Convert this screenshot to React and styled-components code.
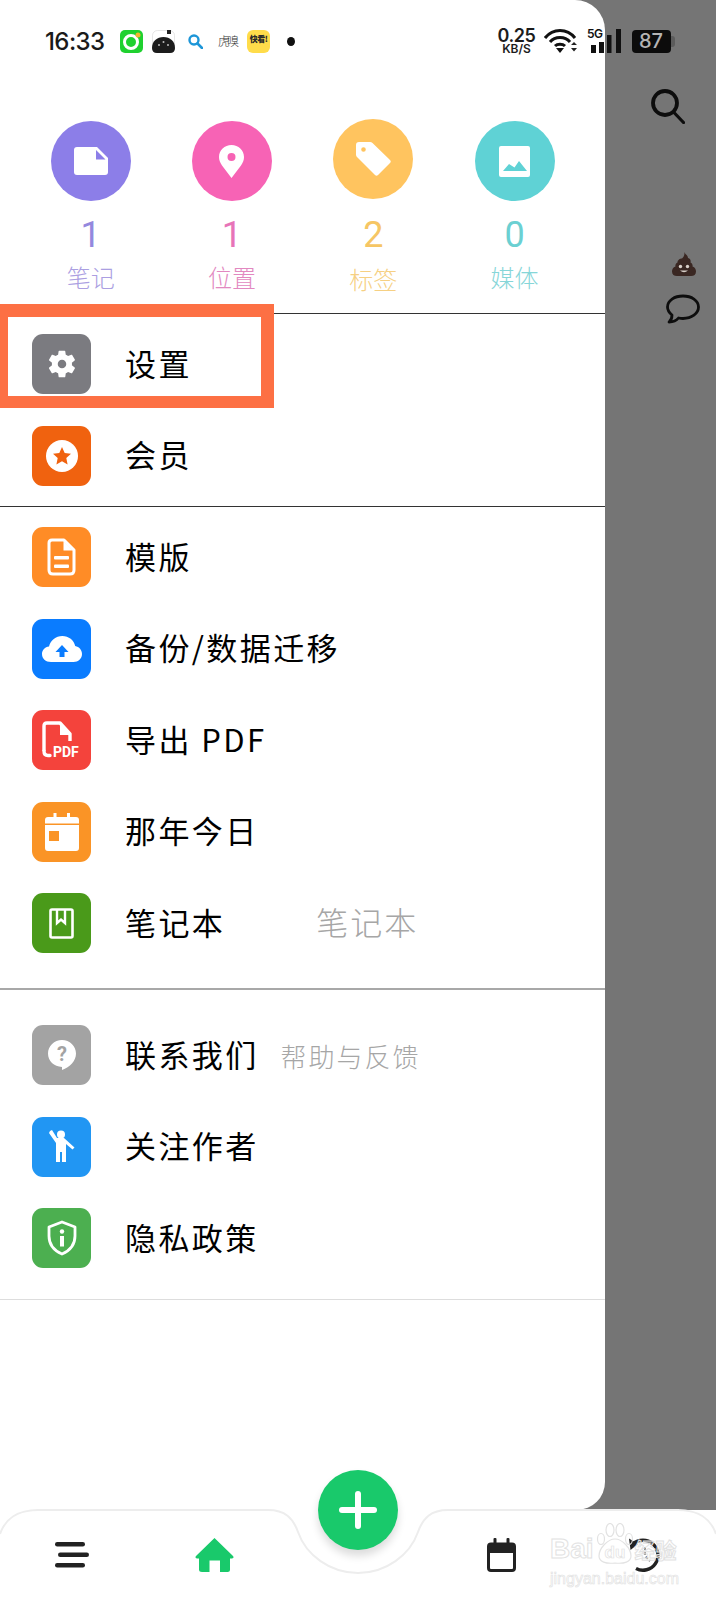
import React from 'react';
import styled, { createGlobalStyle } from 'styled-components';

const GlobalStyle = createGlobalStyle`
  html, body {
    margin: 0;
    padding: 0;
    background: #fff;
    font-family: "Noto Sans CJK SC", "Noto Sans", sans-serif;
  }
`;

// --- page frame --- //

const Page = styled.div`
  position: relative;
  width: 716px;
  height: 1600px;
  overflow: hidden;
  display: flex;
  flex-direction: column;
`;

const Backdrop = styled.div`
  display: flex;
  height: 1510px;
  background: #757575;
`;

const Drawer = styled.aside`
  position: relative;
  width: 605px;
  padding-top: 119px;
  box-sizing: border-box;
  background: #fff;
  border-radius: 0 30px 28px 0;
`;

const SideRail = styled.div`
  flex: 1;
  display: flex;
  flex-direction: column;
  align-items: flex-end;
  padding: 89px 16px 0 0;
`;

const RailIcon = styled.svg`
  display: block;
  margin-top: ${(p) => p.$top}px;
  margin-right: ${(p) => p.$right}px;
`;

// --- status bar --- //

const StatusBar = styled.div`
  position: absolute;
  top: 0;
  left: 0;
  width: 716px;
  height: 82px;
  box-sizing: border-box;
  padding: 0 45px;
  display: flex;
  align-items: center;
  justify-content: space-between;
`;

const StatusGroup = styled.div`
  display: flex;
  align-items: center;
`;

const Clock = styled.span`
  font-family: Inter, "Liberation Sans", sans-serif;
  font-size: 24px;
  font-weight: 500;
  letter-spacing: -0.6px;
  color: #1a1a1a;
  width: 59px;
`;

const AppSlot = styled.span`
  display: flex;
  margin-left: ${(p) => p.$gap}px;
`;

const HuxiuMark = styled.span`
  margin-left: 15px;
  width: 18px;
  font-size: 12px;
  font-weight: 300;
  line-height: 14px;
  letter-spacing: -3px;
  white-space: nowrap;
  color: #333;
`;

const YellowApp = styled.span`
  margin-left: 11px;
  width: 23px;
  height: 23px;
  border-radius: 6px;
  background: #ffdc4a;
  display: flex;
  justify-content: center;
  font-size: 8px;
  line-height: 17px;
  font-weight: 900;
  letter-spacing: -0.5px;
  white-space: nowrap;
  overflow: hidden;
  color: #2a2a2a;
`;

const Dot = styled.span`
  margin-left: 17px;
  width: 8px;
  height: 9px;
  border-radius: 50%;
  background: #111;
`;

const NetSpeed = styled.div`
  width: 37px;
  display: flex;
  flex-direction: column;
  align-items: center;
  font-family: Inter, "Liberation Sans", sans-serif;
  font-weight: 600;
  color: #1c1c1c;
  margin-right: 9px;
`;

const SpeedValue = styled.span`
  font-size: 18px;
  line-height: 15px;
  letter-spacing: -0.4px;
`;

const SpeedUnit = styled.span`
  font-size: 12px;
  line-height: 11px;
`;

const Signal = styled.div`
  position: relative;
  margin-left: 10px;
  width: 34px;
  height: 24px;
`;

const SignalType = styled.span`
  position: absolute;
  left: 0;
  top: -2px;
  font-family: Inter, "Liberation Sans", sans-serif;
  font-size: 12px;
  line-height: 13px;
  font-weight: 600;
  letter-spacing: -0.5px;
  color: #111;
`;

const Battery = styled.div`
  margin-left: 11px;
  width: 39px;
  height: 23px;
  border-radius: 4px;
  background: #0c0c0c;
  color: #b4b4b4;
  font-family: Inter, "Liberation Sans", sans-serif;
  font-size: 20px;
  font-weight: 500;
  line-height: 23px;
  padding-left: 7px;
  box-sizing: border-box;
  position: relative;

  &::after {
    content: '';
    position: absolute;
    right: -4px;
    top: 6px;
    width: 4px;
    height: 11px;
    border-radius: 0 3px 3px 0;
    background: #5c5c5c;
  }
`;

// --- stat circles --- //

const StatRow = styled.div`
  display: grid;
  grid-template-columns: repeat(4, 141.3px);
  padding-left: 20px;
  height: 194px;
`;

const Stat = styled.div`
  display: flex;
  flex-direction: column;
  align-items: center;
`;

const StatCircle = styled.div`
  width: 80px;
  height: 80px;
  margin-top: ${(p) => (p.$raised ? 0 : 2)}px;
  margin-bottom: ${(p) => (p.$raised ? 2 : 0)}px;
  border-radius: 50%;
  background: ${(p) => p.$color};
  display: flex;
  align-items: center;
  justify-content: center;
`;

const StatNumber = styled.div`
  margin-top: 12px;
  font-family: Roboto, "Noto Sans", sans-serif;
  font-size: 36px;
  line-height: 44px;
  font-weight: 400;
  color: ${(p) => p.$color};
`;

const StatLabel = styled.div`
  margin-top: ${(p) => (p.$raised ? 7 : 5)}px;
  font-size: 24px;
  line-height: 30px;
  font-weight: 300;
  color: ${(p) => p.$color};
`;

// --- menu --- //

const Section = styled.section`
  padding: ${(p) => p.$top}px 0 ${(p) => p.$bottom}px;
  border-top: ${(p) => p.$line || 'none'};
`;

const Row = styled.div`
  height: 91.5px;
  display: flex;
  align-items: center;
  padding-left: 32px;
`;

const Tile = styled.div`
  width: 59px;
  height: 60px;
  flex: none;
  border-radius: 11px;
  background: ${(p) => p.$color};
  display: flex;
  align-items: center;
  justify-content: center;
`;

const RowLabel = styled.span`
  margin-left: 34px;
  padding-bottom: 4px;
  font-size: 31px;
  font-weight: 400;
  letter-spacing: 2.4px;
  color: #000;
  white-space: nowrap;
`;

const RowHint = styled.span`
  margin-left: ${(p) => p.$gap}px;
  padding-top: ${(p) => p.$drop}px;
  padding-bottom: 4px;
  font-size: ${(p) => p.$size}px;
  font-weight: 300;
  letter-spacing: ${(p) => p.$spacing}px;
  color: #a6a6a6;
  white-space: nowrap;
`;

const Highlight = styled.div`
  position: absolute;
  left: 0;
  top: 304px;
  width: 274px;
  height: 104px;
  box-sizing: border-box;
  border-style: solid;
  border-color: #fd7044;
  border-width: 13px 13px 12px 8px;
  pointer-events: none;
`;

// --- bottom nav --- //

const BottomNav = styled.nav`
  position: relative;
  flex: 1;
  background: #fff;
  display: grid;
  grid-template-columns: repeat(5, 1fr);
  align-items: center;
  justify-items: center;
`;

const NavEdge = styled.svg`
  position: absolute;
  top: -1px;
  left: 0;
`;

const NavItem = styled.div`
  position: relative;
  display: flex;
`;

const AddButton = styled.button`
  position: absolute;
  top: -40px;
  left: 318px;
  width: 80px;
  height: 80px;
  padding: 0;
  border: none;
  border-radius: 50%;
  background: #19c96b;
  box-shadow: 0 6px 9px rgba(0, 0, 0, 0.14);
  display: flex;
  align-items: center;
  justify-content: center;
`;

const Watermark = styled.div`
  position: absolute;
  left: 550px;
  top: 13px;
  width: 130px;
  height: 62px;
  color: rgba(255, 255, 255, 0.35);
  -webkit-text-stroke: 1px #e2e2e2;
  font-family: "Liberation Sans", sans-serif;
`;

const WatermarkTop = styled.div`
  display: flex;
  align-items: flex-end;
  height: 42px;
  font-size: 28px;
  line-height: 32px;
  font-weight: 700;
`;

const WatermarkPaw = styled.svg`
  margin-left: 1px;
  flex: none;
`;

const WatermarkCjk = styled.span`
  font-family: "Noto Sans CJK SC", sans-serif;
  font-size: 21px;
  line-height: 32px;
  white-space: nowrap;
`;

const WatermarkUrl = styled.div`
  margin-top: 6px;
  font-size: 16px;
  line-height: 16px;
  font-weight: 400;
  -webkit-text-stroke: 0.6px #e0e0e0;
  white-space: nowrap;
`;

// --- icons --- //

const NoteGlyph = () => (
  <svg width="34" height="28" viewBox="0 0 34 28">
    <path d="M3 0H23L34 11V25Q34 28 31 28H3Q0 28 0 25V3Q0 0 3 0Z" fill="#fff" />
    <path d="M22 3V12.500H31.500Z" fill="#8c7ee8" />
  </svg>
);

const PinGlyph = () => (
  <svg width="25" height="33" viewBox="0 0 25 33">
    <path fillRule="evenodd" d="M12.500 0C5.600 0 0 5.400 0 12 0 15 1 17.500 3 20.500L12.500 33 22 20.500C24 17.500 25 15 25 12 25 5.400 19.400 0 12.500 0ZM12.500 8A4 4 0 1 1 12.500 16 4 4 0 0 1 12.500 8Z" fill="#fff" />
  </svg>
);

const TagGlyph = () => (
  <svg width="35" height="34" viewBox="0 0 35 34">
    <path fillRule="evenodd" d="M3 0H14Q15.500 0 16.500 1L34 18Q35.500 19.500 34 21L22 33Q20.500 34.500 19 33L1 15Q0 14 0 12.500V3Q0 0 3 0ZM7.500 5.200A2.300 2.300 0 1 0 7.500 9.800 2.300 2.300 0 0 0 7.500 5.200Z" fill="#fff" />
  </svg>
);

const ImageGlyph = () => (
  <svg width="31" height="31" viewBox="0 0 31 31">
    <path fillRule="evenodd" d="M2 0H29Q31 0 31 2V29Q31 31 29 31H2Q0 31 0 29V2Q0 0 2 0ZM4 25H28L20 15 15.500 21.500 10 18Z" fill="#fff" />
  </svg>
);

const GearGlyph = () => (
  <svg width="32" height="32" viewBox="0 0 24 24">
    <path fill="#fff" d="M19.400 13c.04-.32.1-.66.1-1s-.06-.68-.1-1l2.100-1.650c.2-.15.24-.42.12-.64l-2-3.460c-.12-.22-.4-.3-.62-.22l-2.480 1c-.52-.4-1.080-.72-1.700-.98l-.38-2.640A.5.5 0 0 0 13.950 2h-4a.5.5 0 0 0-.5.420L9.080 5.060c-.62.26-1.180.6-1.700.98l-2.480-1c-.22-.08-.5 0-.62.220l-2 3.460c-.14.220-.08.490.12.640L4.500 11c-.04.320-.1.660-.1 1s.06.680.1 1l-2.100 1.650c-.2.150-.24.420-.12.640l2 3.460c.12.220.4.300.62.220l2.480-1c.52.400 1.080.720 1.700.980l.38 2.640c.04.240.25.420.5.420h4c.25 0 .46-.18.500-.42l.38-2.640c.62-.26 1.180-.6 1.700-.98l2.480 1c.22.080.5 0 .62-.22l2-3.460c.12-.22.080-.49-.12-.64ZM12 15.200a3.200 3.200 0 1 1 0-6.400 3.200 3.200 0 0 1 0 6.400Z" />
  </svg>
);

const StarBadgeGlyph = () => (
  <svg width="32" height="32" viewBox="0 0 32 32">
    <circle cx="16" cy="16" r="16" fill="#fff" />
    <path d="M16 7L18.700 13 25 13.700 20.300 18 21.600 24.500 16 21.200 10.400 24.500 11.700 18 7 13.700 13.300 13Z" fill="#f0620f" />
  </svg>
);

const TemplateGlyph = () => (
  <svg width="29" height="38" viewBox="0 0 29 38">
    <path d="M5 2H17L27 12V32Q27 36 23 36H6Q2 36 2 32V5Q2 2 5 2Z" fill="none" stroke="#fff" strokeWidth="3" strokeLinejoin="round" />
    <path d="M16.500 3V12.500H26Z" fill="#fff" />
    <rect x="7" y="18" width="15" height="3.500" rx="1" fill="#fff" />
    <rect x="7" y="26.500" width="15" height="3.500" rx="1" fill="#fff" />
  </svg>
);

const CloudGlyph = () => (
  <svg width="40" height="26" viewBox="0 0 40 26">
    <path fillRule="evenodd" d="M9 26C3.500 26 0 22.500 0 18 0 14 3 11 7 10.500 8.500 4.500 13.800 0 20.300 0 26.800 0 32 4.200 33.200 10 37.200 10.700 40 14 40 18 40 22.500 36.300 26 31.500 26ZM20 9L13.500 16H17.500V21H22.500V16H26.500Z" fill="#fff" />
  </svg>
);

const PdfGlyph = () => (
  <svg width="40" height="38" viewBox="0 0 40 38">
    <path d="M2 30V5Q2 2 5 2H18L28 13V20" fill="none" stroke="#fff" strokeWidth="3.400" strokeLinejoin="round" />
    <path d="M2 30Q2 34.500 6 34.500H8" fill="none" stroke="#fff" strokeWidth="3.400" strokeLinecap="round" />
    <path d="M18 2V14H28Z" fill="#fff" />
    <text x="11" y="36" fontFamily="Roboto, 'Liberation Sans', sans-serif" fontSize="14" fontWeight="700" fill="#fff">PDF</text>
  </svg>
);

const CalendarTileGlyph = () => (
  <svg width="34" height="38" viewBox="0 0 34 38">
    <path fillRule="evenodd" d="M8.500 0H11.500V4H22V0H25V4H31Q34 4 34 7V35Q34 38 31 38H3Q0 38 0 35V7Q0 4 3 4H8.500ZM0 10.500V12H34V10.500ZM4 18V28H14V18Z" fill="#fff" />
  </svg>
);

const NotebookGlyph = () => (
  <svg width="25" height="31" viewBox="0 0 25 31">
    <path d="M3 1.500H22Q23.500 1.500 23.500 3V28Q23.500 29.500 22 29.500H3Q1.500 29.500 1.500 28V3Q1.500 1.500 3 1.500Z" fill="none" stroke="#fff" strokeWidth="2.600" />
    <path d="M8 2V15L12 11.500 16 15V2" fill="none" stroke="#fff" strokeWidth="2.400" />
  </svg>
);

const HelpGlyph = () => (
  <svg width="28" height="30" viewBox="0 0 28 30">
    <path d="M14 0C6.300 0 0 6 0 13.500 0 21 6 26.500 14 27V30C22 27 28 21 28 13.500 28 6 21.700 0 14 0Z" fill="#fff" />
    <text x="14" y="20.500" textAnchor="middle" fontFamily="Roboto, sans-serif" fontSize="20" fontWeight="700" fill="#a3a3a3">?</text>
  </svg>
);

const WaveGlyph = () => (
  <svg width="26" height="33" viewBox="0 0 26 33">
    <circle cx="12" cy="4.500" r="4" fill="#fff" />
    <path d="M1 1L3 0 8 8H15L25.500 17.500 23.500 19.500 17 14V32H13V22H11V32H7V13L0 3Z" fill="#fff" />
  </svg>
);

const ShieldGlyph = () => (
  <svg width="30" height="36" viewBox="0 0 30 36">
    <path d="M15 2L28 7V16C28 25 22 31 15 34 8 31 2 25 2 16V7Z" fill="none" stroke="#fff" strokeWidth="2.800" strokeLinejoin="round" />
    <circle cx="15" cy="11.500" r="2.200" fill="#fff" />
    <rect x="13" y="16" width="4" height="10.500" fill="#fff" />
  </svg>
);

const stats = [
  { value: '1', label: '笔记', circle: '#8c7ee8', number: '#9488de', text: '#ab9fe2', glyph: <NoteGlyph /> },
  { value: '1', label: '位置', circle: '#f763b5', number: '#e774b8', text: '#e288c0', glyph: <PinGlyph /> },
  { value: '2', label: '标签', circle: '#ffc45f', number: '#f6c664', text: '#f6d083', glyph: <TagGlyph />, raised: true },
  { value: '0', label: '媒体', circle: '#5fd2d5', number: '#6bd0d2', text: '#86d6d8', glyph: <ImageGlyph /> },
];

const groups = [
  {
    top: 4.25,
    bottom: 4.75,
    line: '1px solid #333',
    rows: [
      { label: '设置', color: '#7b7b80', glyph: <GearGlyph /> },
      { label: '会员', color: '#f0620f', glyph: <StarBadgeGlyph /> },
    ],
  },
  {
    top: 4.25,
    bottom: 19.25,
    line: '1px solid #333',
    rows: [
      { label: '模版', color: '#ff8c26', glyph: <TemplateGlyph /> },
      { label: '备份/数据迁移', color: '#0a7cff', glyph: <CloudGlyph /> },
      { label: '导出 PDF', color: '#f4433c', glyph: <PdfGlyph /> },
      { label: '那年今日', color: '#fa9426', glyph: <CalendarTileGlyph /> },
      { label: '笔记本', color: '#4a9a1a', glyph: <NotebookGlyph />, hint: { text: '笔记本', gap: 91, drop: 0, size: 32, spacing: 2 } },
    ],
  },
  {
    top: 19.25,
    bottom: 15.25,
    line: '2px solid #a8a8a8',
    rows: [
      { label: '联系我们', color: '#a3a3a3', glyph: <HelpGlyph />, hint: { text: '帮助与反馈', gap: 22, drop: 4, size: 26, spacing: 2 } },
      { label: '关注作者', color: '#2196f3', glyph: <WaveGlyph /> },
      { label: '隐私政策', color: '#4caf50', glyph: <ShieldGlyph /> },
    ],
  },
];

export default function App() {
  return (
    <>
      <GlobalStyle />
      <Page>
        <Backdrop>
          <Drawer>
            <StatRow>
              {stats.map((s) => (
                <Stat key={s.label}>
                  <StatCircle $color={s.circle} $raised={s.raised}>{s.glyph}</StatCircle>
                  <StatNumber $color={s.number}>{s.value}</StatNumber>
                  <StatLabel $color={s.text} $raised={s.raised}>{s.label}</StatLabel>
                </Stat>
              ))}
            </StatRow>
            {groups.map((g, i) => (
              <Section key={i} $top={g.top} $bottom={g.bottom} $line={g.line}>
                {g.rows.map((r) => (
                  <Row key={r.label}>
                    <Tile $color={r.color}>{r.glyph}</Tile>
                    <RowLabel>{r.label}</RowLabel>
                    {r.hint && (
                      <RowHint $gap={r.hint.gap} $drop={r.hint.drop} $size={r.hint.size} $spacing={r.hint.spacing}>
                        {r.hint.text}
                      </RowHint>
                    )}
                  </Row>
                ))}
              </Section>
            ))}
            <Section $top={0} $bottom={0} $line="1px solid #ddd" />
            <Highlight />
          </Drawer>
          <SideRail>
            <RailIcon $top={0} $right={15} width="34" height="35" viewBox="0 0 34 35" fill="none" stroke="#0d0d0d">
              <circle cx="14" cy="14" r="12" strokeWidth="3.800" />
              <path d="M23 23.500L32.500 33.500" strokeWidth="3.200" strokeLinecap="round" />
            </RailIcon>
            <RailIcon $top={128} $right={4} width="24" height="24" viewBox="0 0 24 24">
              <path d="M12.500 0C13 2.500 16 3 16 6 18.500 6.500 19 9 18.500 10.500 20 11 21 13 20.500 14.500 23 15 24 17.500 24 19.500 24 22.500 22 24 19 24H5C2 24 0 22.500 0 19.500 0 17.500 1 15 3.500 14.500 3 13 4 11 5.500 10.500 5.500 8 8 6.500 10 6.500 12 5 12.500 3 12.500 0Z" fill="#3a2722" />
              <circle cx="8.500" cy="14.500" r="1.700" fill="#d8cfc8" />
              <circle cx="15.500" cy="14.500" r="1.700" fill="#d8cfc8" />
              <path d="M8 18.500Q12 22 16 18.500Z" fill="#d8cfc8" />
            </RailIcon>
            <RailIcon $top={18} $right={0} width="34" height="30" viewBox="0 0 34 30" fill="none" stroke="#0d0d0d" strokeWidth="2.800">
              <path d="M17 2C8.500 2 1.500 6.500 1.500 13 1.500 16.500 3.500 19 6 21 6 24 5 26.500 3 28 7 28 10.500 26.500 12.500 24 14 24.300 15.500 24.500 17 24.500 25.500 24.500 32.500 19.500 32.500 13 32.500 6.500 25.500 2 17 2Z" strokeLinejoin="round" />
            </RailIcon>
          </SideRail>
        </Backdrop>

        <BottomNav>
          <NavEdge width="716" height="70" viewBox="0 0 716 70" fill="none">
            <path
              d="M0 25C5 10 18 1 38 1H268C285 1 293 9 298 23 306 46 330 64 358 64 386 64 410 46 418 23 423 9 431 1 448 1H678C698 1 711 10 716 25"
              stroke="#ededed"
              strokeWidth="2"
            />
          </NavEdge>
          <NavItem>
            <svg width="34" height="26" viewBox="0 0 34 26" fill="#222">
              <rect x="0" y="0" width="30" height="4.500" rx="2.200" />
              <rect x="3" y="10.500" width="31" height="4.500" rx="2.200" />
              <rect x="0" y="21" width="30" height="4.500" rx="2.200" />
            </svg>
          </NavItem>
          <NavItem>
            <svg width="39" height="34" viewBox="0 0 39 34">
              <path d="M19.500 0L38 18Q39.500 20 37 20.500H35V31.500Q35 34 32.500 34H25V22.500H14.500V34H7Q4 34 4 31.500V20.500H2Q-.5 20 1 18Z" fill="#19c96b" />
            </svg>
          </NavItem>
          <NavItem />
          <NavItem>
            <svg width="29" height="34" viewBox="0 0 29 34">
              <rect x="1.500" y="6" width="26" height="26.500" rx="2.500" fill="none" stroke="#222" strokeWidth="3" />
              <rect x="1.500" y="6" width="26" height="9" fill="#222" />
              <rect x="6.500" y="0" width="3" height="7" rx="1" fill="#222" />
              <rect x="19.500" y="0" width="3" height="7" rx="1" fill="#222" />
            </svg>
          </NavItem>
          <NavItem>
            <svg width="34" height="36" viewBox="0 0 34 36" fill="none">
              <path d="M9 31.500A15 15 0 1 0 6 7" stroke="#222" strokeWidth="3.400" />
              <path d="M2 1.500L11 7 3.500 13Z" fill="#222" />
              <path d="M18 10V19L23 24" stroke="#555" strokeWidth="2" strokeDasharray="3 2" />
            </svg>
          </NavItem>
          <AddButton aria-label="add">
            <svg width="40" height="40" viewBox="0 0 40 40" fill="#fff">
              <rect x="17" y="1" width="6" height="38" rx="3" />
              <rect x="1" y="17" width="38" height="6" rx="3" />
            </svg>
          </AddButton>
          <Watermark>
            <WatermarkTop>
              Bai
              <WatermarkPaw width="40" height="42" viewBox="0 0 40 42" fill="none" stroke="#e2e2e2" strokeWidth="1.200">
                <ellipse cx="15" cy="7" rx="4" ry="6.500" />
                <ellipse cx="25" cy="7" rx="4" ry="6.500" />
                <ellipse cx="6" cy="16" rx="3.500" ry="5.500" />
                <ellipse cx="34" cy="16" rx="3.500" ry="5.500" />
                <path d="M20 16C13 16 4 25 4 33 4 39 11 41 20 40 29 41 36 39 36 33 36 25 27 16 20 16Z" />
                <text x="20" y="35" textAnchor="middle" fontSize="17" fontFamily="Liberation Sans, sans-serif" strokeWidth="0.700">du</text>
              </WatermarkPaw>
              <WatermarkCjk>经验</WatermarkCjk>
            </WatermarkTop>
            <WatermarkUrl>jingyan.baidu.com</WatermarkUrl>
          </Watermark>
        </BottomNav>

        <StatusBar>
          <StatusGroup>
            <Clock>16:33</Clock>
            <AppSlot $gap={16}>
              <svg width="23" height="23" viewBox="0 0 23 23">
                <rect width="23" height="23" rx="5" fill="#1fd12f" />
                <circle cx="11" cy="12" r="6.500" fill="none" stroke="#fff" strokeWidth="3" />
                <circle cx="18" cy="5" r="2.500" fill="#f5b52e" />
              </svg>
            </AppSlot>
            <AppSlot $gap={9}>
              <svg width="23" height="23" viewBox="0 0 23 23">
                <rect x="0.500" y="0.500" width="22" height="22" rx="5" fill="#fff" stroke="#ccc" strokeWidth="0.500" />
                <path d="M15 0H19V4H15Z" fill="#222" />
                <path d="M0 18C0 11 5 7 11.500 7S23 11 23 18Q23 23 18 23H5Q0 23 0 18Z" fill="#1c1c1c" />
                <circle cx="7" cy="15" r="1" fill="#bbb" />
                <circle cx="11.500" cy="12" r="1" fill="#bbb" />
                <circle cx="16" cy="15" r="1" fill="#bbb" />
              </svg>
            </AppSlot>
            <AppSlot $gap={13}>
              <svg width="15" height="15" viewBox="0 0 15 15" fill="none" stroke="#1d96d8">
                <circle cx="6" cy="6" r="4.500" strokeWidth="2.400" />
                <path d="M9.500 9.500L14 14" strokeWidth="2.600" strokeLinecap="round" />
              </svg>
            </AppSlot>
            <HuxiuMark>虎嗅</HuxiuMark>
            <YellowApp>快看!</YellowApp>
            <Dot />
          </StatusGroup>
          <StatusGroup>
            <NetSpeed>
              <SpeedValue>0.25</SpeedValue>
              <SpeedUnit>KB/S</SpeedUnit>
            </NetSpeed>
            <svg width="33" height="24" viewBox="0 0 33 24" fill="none" stroke="#111">
              <path d="M1 9C9-1 23-1 31 9" strokeWidth="3" />
              <path d="M6 13C11 7 21 7 26 13" strokeWidth="3" />
              <path d="M11 17C13.500 14.500 18.500 14.500 21 17" strokeWidth="3" />
              <path d="M12 19H20L16 24Z" fill="#111" stroke="none" />
              <path d="M27 16L30 13 33 16ZM27 19L30 22.500 33 19Z" fill="#222" stroke="none" />
            </svg>
            <Signal>
              <svg width="34" height="24" viewBox="0 0 34 24" fill="#111">
                <rect x="4" y="16" width="5" height="8" />
                <rect x="12" y="13" width="5" height="11" />
                <rect x="20" y="6" width="4.500" height="18" />
                <rect x="29" y="0" width="5" height="24" />
              </svg>
              <SignalType>5G</SignalType>
            </Signal>
            <Battery>87</Battery>
          </StatusGroup>
        </StatusBar>
      </Page>
    </>
  );
}
